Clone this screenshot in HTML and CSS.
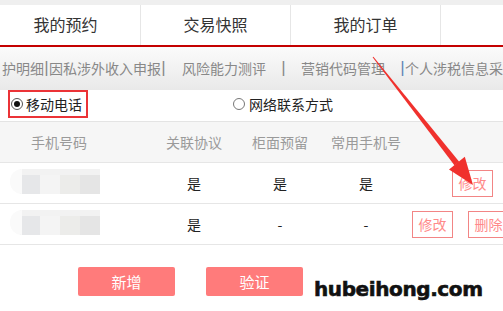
FILE: index.html
```html
<!DOCTYPE html>
<html lang="zh">
<head>
<meta charset="utf-8">
<link rel="stylesheet" href="styles.css">
</head>
<body>
<div class="page">
  <div class="topstrip"></div>
  <div class="tabs">
    <div class="tab">我的预约</div>
    <div class="tab">交易快照</div>
    <div class="tab">我的订单</div>
    <div class="tab"></div>
  </div>
  <div class="subnav">
    <span class="item first">护明细</span><span class="sep">|</span><span class="item">因私涉外收入申报</span><span class="sep">|</span><span class="item gap">风险能力测评</span><span class="sep wide">|</span><span class="item">营销代码管理</span><span class="sep wide blue">|</span><span class="item">个人涉税信息采集</span>
  </div>
  <div class="radios">
    <label class="radio highlight"><span class="dot checked"></span><span>移动电话</span></label>
    <label class="radio second"><span class="dot"></span><span>网络联系方式</span></label>
  </div>
  <div class="table">
    <div class="row head">
      <div class="c1">手机号码</div>
      <div class="cc">关联协议</div>
      <div class="cc">柜面预留</div>
      <div class="cc">常用手机号</div>
      <div></div>
    </div>
    <div class="row">
      <div class="c1"><span class="blur"><i class="b1"></i><i class="b2"></i><i class="b3"></i><i class="b4"></i></span></div>
      <div class="cc">是</div>
      <div class="cc">是</div>
      <div class="cc">是</div>
      <div class="act one"><span class="btn">修改</span></div>
    </div>
    <div class="row">
      <div class="c1"><span class="blur"><i class="b1"></i><i class="b2"></i><i class="b3"></i><i class="b4"></i></span></div>
      <div class="cc">是</div>
      <div class="cc">-</div>
      <div class="cc">-</div>
      <div class="act two"><span class="btn">修改</span><span class="btn">删除</span></div>
    </div>
  </div>
  <div class="actions">
    <span class="big">新增</span>
    <span class="big">验证</span>
    <span class="mark">hubeihong.com</span>
  </div>
  <svg class="arrow" width="503" height="311" viewBox="0 0 503 311">
    <polygon fill="#f0312d" points="372.6,57.3 373.4,56.7 459.2,161.7 454.6,165.4"/>
    <polygon fill="#f0312d" points="473,185 464.8,156.8 449,169.6"/>
  </svg>
</div>
</body>
</html>
```
FILE: styles.css
```css
html, body {
  margin: 0;
  padding: 0;
  background: #fff;
}
body {
  width: 503px;
  height: 311px;
  overflow: hidden;
  font-family: "Noto Sans CJK SC", "Microsoft YaHei", sans-serif;
}
.page {
  position: relative;
  width: 503px;
  height: 311px;
  overflow: hidden;
}
.topstrip {
  height: 5px;
  background: #efefef;
}
.tabs {
  display: flex;
  height: 40px;
  margin-left: -9px;
  border-bottom: 2px solid #c40000;
}
.tab {
  flex: 0 0 150px;
  box-sizing: border-box;
  border-right: 1px solid #e6e6e6;
  display: flex;
  align-items: center;
  justify-content: center;
  font-size: 16px;
  color: #333;
  padding-bottom: 2px;
}
.subnav {
  height: 43px;
  display: flex;
  align-items: center;
  white-space: nowrap;
  font-size: 14px;
  color: #888;
  background: linear-gradient(#fbfbfb, #e9e9e9);
  padding-bottom: 2px;
  box-sizing: border-box;
}
.item { flex: none; }
.item.first { margin-left: 2px; }
.item.gap { margin-left: 16px; }
.sep {
  flex: none;
  width: 5px;
  text-align: center;
  font-family: "Liberation Sans", sans-serif;
  font-size: 17px;
  color: #8a8a8a;
}
.sep.wide { margin: 0 0 0 15px; width: 5px; }
.sep.wide + .item { margin-left: 15px; }
.sep.blue { color: #5f86b8; }
.sep.blue + .item { margin-left: 0; }
.radios {
  height: 31px;
  display: flex;
  align-items: flex-start;
  padding-left: 8px;
  font-size: 14px;
  color: #222;
}
.radio {
  display: inline-flex;
  align-items: center;
  gap: 3px;
  height: 28px;
  box-sizing: border-box;
}
.radio.highlight {
  border: 2px solid #eb3337;
  padding: 0 4px 0 1px;
}
.radio.second {
  margin-left: 145px;
  gap: 4px;
}
.dot {
  width: 12px;
  height: 12px;
  box-sizing: border-box;
  border: 1px solid #777;
  border-radius: 50%;
  background: #fff;
  display: inline-flex;
  align-items: center;
  justify-content: center;
}
.dot.checked { border-color: #555; }
.dot.checked::after {
  content: "";
  width: 6px;
  height: 6px;
  border-radius: 50%;
  background: #111;
}
.table {
  border-top: 1px solid #e4e4e4;
}
.row {
  display: grid;
  grid-template-columns: 151px 86px 86px 86px 1fr;
  align-items: center;
  height: 40px;
  border-bottom: 1px solid #e6e6e6;
  font-size: 14px;
  color: #222;
}
.row.head {
  background: #f6f6f6;
  color: #9a9a9a;
}
.c1 { padding-left: 31px; }
.cc { text-align: center; }
.blur {
  display: inline-flex;
  margin-left: -11px;
  width: 80px;
  height: 19px;
  border-top: 6px solid #f2f2f2;
  position: relative;
}
.blur::before {
  content: "";
  position: absolute;
  left: -10px;
  top: -6px;
  width: 12px;
  height: 25px;
  border-radius: 12px 0 0 12px;
  background: #fafafa;
}
.blur i { flex: 1; }
.b1 { background: #e6e7e9; }
.b2 { background: #f4f4f4; }
.b3 { background: #ececea; }
.b4 { background: #e5e5e5; }
.act {
  display: flex;
  gap: 15px;
  white-space: nowrap;
}
.act.one { padding-left: 43px; }
.act.two { padding-left: 3px; }
.btn {
  flex: none;
  width: 41px;
  height: 27px;
  box-sizing: border-box;
  border: 1px solid #f28585;
  display: inline-flex;
  align-items: center;
  justify-content: center;
  color: #ff8a8a;
  font-size: 14px;
}
.actions {
  display: flex;
  align-items: flex-start;
  padding-left: 78px;
  margin-top: 22px;
  gap: 31px;
}
.big {
  flex: none;
  width: 97px;
  height: 29px;
  border-radius: 2px;
  background: #ff7b7b;
  color: #fff;
  font-size: 15px;
  display: inline-flex;
  align-items: center;
  justify-content: center;
}
.mark {
  flex: none;
  margin-left: -20px;
  margin-top: 10px;
  font-family: "DejaVu Sans", sans-serif;
  font-weight: bold;
  font-size: 20px;
  letter-spacing: -0.4px;
  color: #111;
  -webkit-text-stroke: 0.6px #111;
}
.arrow {
  position: absolute;
  left: 0;
  top: 0;
  pointer-events: none;
}
```
